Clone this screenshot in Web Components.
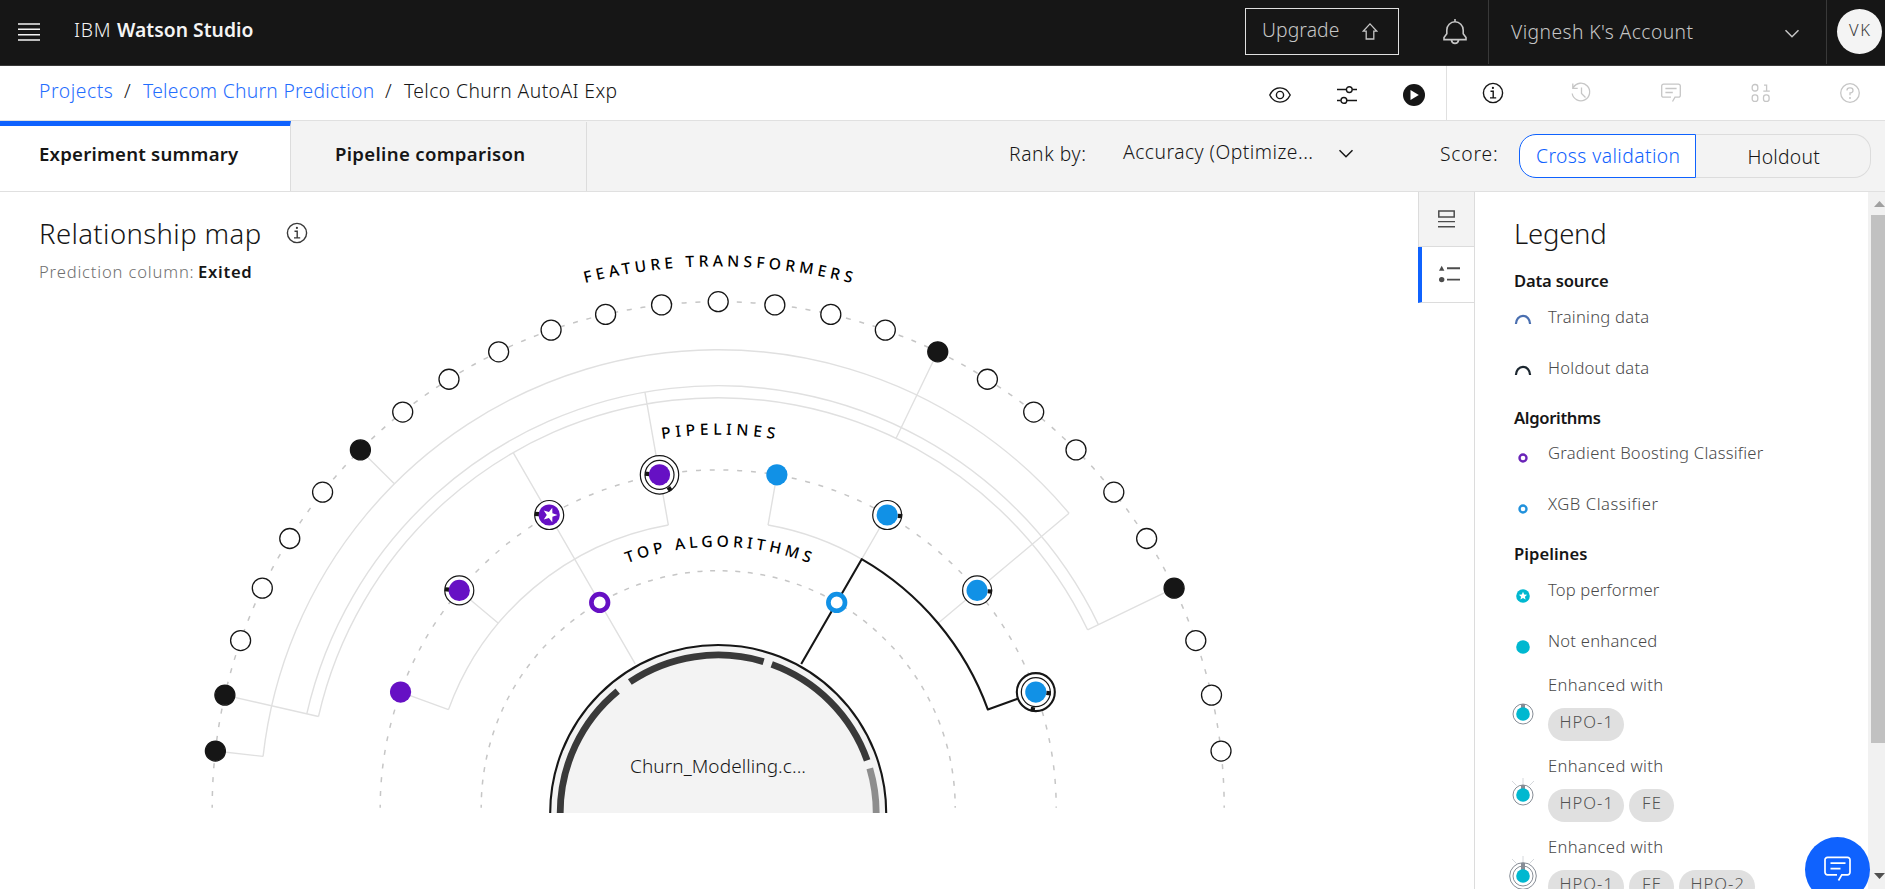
<!DOCTYPE html>
<html lang="en">
<head>
<meta charset="utf-8">
<title>IBM Watson Studio</title>
<style>
html,body{margin:0;height:100%;overflow:hidden;background:#fff;font-family:"Noto Sans",sans-serif;font-weight:300;color:#161616}
</style>
</head>
<body>
<watson-app></watson-app>
<script>
const define = (name, html, setup) => {
  const tpl = document.createElement('template');
  tpl.innerHTML = html;
  customElements.define(name, class extends HTMLElement {
    connectedCallback() {
      if (this.shadowRoot) return;
      this.attachShadow({mode: 'open'}).append(document.importNode(tpl.content, true));
      if (setup) setup.call(this, this.shadowRoot);
    }
  });
};

/* Single line of text tracked to a given width: w = width, s = font size */
define('fit-text', `<style>
:host{display:block;white-space:nowrap;line-height:24px;flex:none}
</style><span><slot></slot></span>`, function (root) {
  const w = +this.getAttribute('w'), n = this.textContent.length;
  this.style.fontSize = (this.getAttribute('s') || 19.3) + 'px';
  const span = root.querySelector('span');
  const nat = span.getBoundingClientRect().width;
  this.style.letterSpacing = ((w + 1.5 - nat) / n) + 'px';
  this.style.width = w + 'px';
});

const ICONS = {
  menu: ['22 18', '<path d="M0 1h22M0 6.3h22M0 11.7h22M0 17h22" stroke-width="1.5"/>'],
  up: ['16 17', '<path d="M8 .9 14.9 8.2H11.8V16H4.2V8.2H1.1Z" stroke-width="1.3"/>'],
  bell: ['24 27', '<path d="M12 0v2.5M1 20.6v-2.2l2.8-3.6V11a8.2 8.2 0 0 1 16.4 0v3.8l2.8 3.6v2.2ZM8.3 21a3.8 4.4 0 0 0 7.4 0" stroke-width="1.6"/>'],
  down: ['16 9', '<path d="M1.5 1.2 8 7.7l6.5-6.5" stroke-width="1.5"/>'],
  eye: ['22 18', '<path d="M.8 9C3 4.500 6.500 1.900 11 1.900S19 4.500 21.200 9C19 13.500 15.500 16.100 11 16.100S3 13.500.8 9Z" stroke-width="1.4"/><circle cx="11" cy="9" r="3.600" stroke-width="1.400"/>'],
  sliders: ['20 18', '<path d="M0 3.600h9.200M15.400 3.600H20M0 14.400h3.800M10 14.400H20" stroke-width="1.500"/><circle cx="12.300" cy="3.600" r="2.900" stroke-width="1.400"/><circle cx="6.900" cy="14.400" r="2.900" stroke-width="1.400"/>'],
  play: ['22 22', '<circle cx="11" cy="11" r="11" fill="currentColor" stroke="none"/><path d="M7.500 6v10l8.300-5z" fill="#fff" stroke="none"/>'],
  info: ['22 22', '<circle cx="11" cy="11" r="9.600" stroke-width="1.400"/><path d="M8.500 9.300h2.700v6.400M8 15.900h6.200" stroke-width="1.400"/><circle cx="10.900" cy="5.900" r="1.100" fill="currentColor" stroke="none"/>'],
  history: ['22 22', '<path d="M3.300 5.500A8.800 8.800 0 1 1 2.200 11.500M2.800 1.400v4.900h4.900M11.500 5.500v6l4 4" stroke-width="1.300"/>'],
  chat: ['22 20', '<path d="M12.500 18.500l2.500-4.300h3.500a1.800 1.800 0 0 0 1.800-1.800V3a1.800 1.800 0 0 0-1.800-1.800H3.500A1.800 1.800 0 0 0 1.700 3v9.400a1.800 1.800 0 0 0 1.800 1.800H11M5.400 5.500h11.200M5.400 9.500h7.400" stroke-width="1.300"/>'],
  bits: ['20 20', '<rect x="1.200" y="1.500" width="5.600" height="6.500" rx="2.500" stroke-width="1.300"/><rect x="1.200" y="11.900" width="5.600" height="6.500" rx="2.500" stroke-width="1.300"/><rect x="12.500" y="11.900" width="5.600" height="6.500" rx="2.500" stroke-width="1.300"/><path d="M13 2.200h2.600v6M12.300 8.200h6.500" stroke-width="1.300"/>'],
  help: ['22 22', '<circle cx="11" cy="11" r="9.300" stroke-width="1.300"/><path d="M8 8.600V8.300a2.500 2.500 0 0 1 2.500-2.500h1a2.500 2.500 0 0 1 0 5H11v2.500" stroke-width="1.300"/><circle cx="11" cy="15.900" r="1" fill="currentColor" stroke="none"/>'],
  rows: ['17 18', '<rect x=".8" y="1" width="15.400" height="6" stroke-width="1.500"/><path d="M0 11.600h17M0 16.800h17" stroke-width="1.400"/>'],
  legend: ['21 18', '<path d="M0 5.800 2.700.8 5.400 5.800Z" fill="currentColor" stroke="none"/><circle cx="2.700" cy="14.600" r="2.700" fill="currentColor" stroke="none"/><path d="M8 3.200h13M8 14.600h13" stroke-width="1.900"/>'],
  fab: ['28 26', '<path d="M14.500 24.500l3.300-5.700h5.700a2.500 2.500 0 0 0 2.500-2.500V3.800a2.500 2.500 0 0 0-2.500-2.500H3.500A2.500 2.500 0 0 0 1 3.800v12.500a2.500 2.500 0 0 0 2.500 2.500H13M6.500 7.200h15M6.500 12.700h10" stroke-width="1.700"/>'],
};
define('ui-icon', `<style>:host{display:block;flex:none}svg{display:block}</style><svg fill="none" stroke="currentColor"></svg>`, function (root) {
  const [box, art] = ICONS[this.getAttribute('name')], [w, h] = box.split(' ');
  const svg = root.querySelector('svg');
  svg.setAttribute('viewBox', '0 0 ' + box);
  svg.setAttribute('width', w);
  svg.setAttribute('height', h);
  svg.innerHTML = art;
});

define('app-header', `<style>
:host{display:flex;height:65px;background:#161616;border-bottom:1px solid #393939;color:#c6c6c6;align-items:flex-start;flex:none}
.menu{margin:23px 0 0 18px;color:#f4f4f4}
.ibm{margin:18px 0 0 34px;color:#f4f4f4}.ws{margin:18px 0 0 7px;color:#f4f4f4;font-weight:600}
.up{margin-left:auto;margin-top:8px;border:1px solid #e0e0e0;box-sizing:border-box;width:154px;height:47px;display:flex;padding:9px 0 0 16px;gap:24px}
.up ui-icon{margin-top:5px}
.bell{margin:19px 21px 0 44px}
.acct{border:solid #393939;border-width:0 1px;height:64px;width:339px;display:flex;padding:0 0 0 22px;box-sizing:border-box}
.acct fit-text{margin-top:20px}.acct ui-icon{margin:29px 0 0 92px}
.av{width:45px;height:45px;margin:9px 3px 0 10px;border-radius:50%;background:#f4f4f4;color:#393939;display:flex;justify-content:center}
.av fit-text{margin-top:9px}
</style>
<ui-icon class="menu" name="menu"></ui-icon>
<fit-text class="ibm" w="36">IBM</fit-text><fit-text class="ws" w="135">Watson Studio</fit-text>
<div class="up"><fit-text w="76">Upgrade</fit-text><ui-icon name="up"></ui-icon></div>
<ui-icon class="bell" name="bell"></ui-icon>
<div class="acct"><fit-text w="181">Vignesh K's Account</fit-text><ui-icon name="down"></ui-icon></div>
<div class="av"><fit-text s="16.500" w="21">VK</fit-text></div>`);

define('crumb-bar', `<style>
:host{display:flex;height:55px;border-bottom:1px solid #e0e0e0;flex:none;box-sizing:border-box;align-items:flex-start}
.c{display:flex;gap:12px;padding:13px 0 0 39px}
.a{color:#0f62fe;opacity:.92}
.t{margin-left:auto;display:flex;gap:46px;align-items:center;height:54px;padding:4px 21px 0 0;box-sizing:border-box;border-right:1px solid #e0e0e0}
.i{display:flex;align-items:center;height:54px;width:438px;box-sizing:border-box;padding:0 24px 0 35px;justify-content:space-between;color:#c6c6c6}
.i .on{color:#161616}.i .m{margin:0 2px 0 -2px}
</style>
<div class="c"><fit-text class="a" w="73">Projects</fit-text><fit-text w="7">/</fit-text><fit-text class="a" w="230">Telecom Churn Prediction</fit-text><fit-text w="7">/</fit-text><fit-text w="212">Telco Churn AutoAI Exp</fit-text></div>
<div class="t"><ui-icon name="eye"></ui-icon><ui-icon name="sliders"></ui-icon><ui-icon name="play"></ui-icon></div>
<div class="i"><ui-icon class="on" name="info"></ui-icon><ui-icon class="m" name="history"></ui-icon><ui-icon class="m" name="chat"></ui-icon><ui-icon name="bits"></ui-icon><ui-icon name="help"></ui-icon></div>`);

define('tab-bar', `<style>
:host{display:flex;height:71px;background:#f3f3f3;border-bottom:1px solid #e0e0e0;box-sizing:border-box;flex:none;align-items:flex-start}
.tab{height:70px;box-sizing:border-box;border-right:1px solid #dcdcdc;padding:20px 0 0 44px;font-weight:600}
.on{background:#fff;border-top:5px solid #0f62fe;width:291px;padding:16px 0 0 39px}
.off{width:296px;margin-top:1px;height:69px}
.r{margin:21px 0 0 auto}.v{margin:19px 0 0 38px}ui-icon{margin:28px 86px 0 26px}.s{margin-top:21px}
.seg{display:flex;margin:13px 14px 0 22px;height:44px}
.seg div{box-sizing:border-box;display:flex;justify-content:center;padding-top:10px}
.seg .x{padding-top:9px}
.x{width:177px;border:1px solid #0f62fe;border-radius:17px 0 0 17px;background:#fff;color:#0f62fe}
.h{width:175px;border:1px solid #dcdcdc;border-left:0;border-radius:0 17px 17px 0}
</style>
<div class="tab on"><fit-text s="18.600" w="198">Experiment summary</fit-text></div>
<div class="tab off"><fit-text s="18.600" w="189">Pipeline comparison</fit-text></div>
<fit-text class="r" w="76">Rank by:</fit-text><fit-text class="v" w="189">Accuracy (Optimize...</fit-text>
<ui-icon name="down"></ui-icon>
<fit-text class="s" w="57">Score:</fit-text>
<div class="seg"><div class="x"><fit-text w="143">Cross validation</fit-text></div><div class="h"><fit-text w="71">Holdout</fit-text></div></div>`);

define('relationship-map', `<style>
:host{display:grid;flex:1;min-width:0;height:697px}
:host>*{grid-area:1/1}
.t{display:flex;flex-direction:column;align-items:flex-start;padding:28px 0 0 39px}
.row{display:flex;gap:26px}.row fit-text{line-height:28px}.row ui-icon{margin-top:2px}
.sub{display:flex;gap:5px;margin-top:12px;color:#6f6f6f}.sub b{font-weight:600;color:#161616}
ui-icon{color:#393939}
svg{display:block}
.lab{font-size:15.600px;font-weight:500;fill:#000}
</style>
<svg width="1418" height="697" viewBox="0 192 1418 697"></svg>
<div class="t"><div class="row"><fit-text s="27.500" w="221">Relationship map</fit-text><ui-icon name="info"></ui-icon></div>
<div class="sub"><fit-text s="16.600" w="154">Prediction column:</fit-text><b><fit-text s="16.600" w="53">Exited</fit-text></b></div></div>`, function (root) {
  const CX = 718.2, CY = 807.700, K = '#161616', G = '#e0e0e0', P = '#6610c4', B = '#1191e6';
  const pt = (r, a, cy = CY) => [CX - r * Math.cos(a * Math.PI / 180), cy - r * Math.sin(a * Math.PI / 180)];
  const f = p => p.map(v => v.toFixed(2)).join(' ');
  const arc = (r, a, b, cy) => `M${f(pt(r, a, cy))}A${r} ${r} 0 0 1 ${f(pt(r, b, cy))}`;
  const line = (a, r1, r2) => `M${f(pt(r1, a))}L${f(pt(r2, a))}`;
  const path = (d, c, w, x = '') => `<path d="${d}" fill="none" stroke="${c}" stroke-width="${w}" ${x}/>`;
  const circ = (p, r, fill, st = 'none', w = 0) => `<circle cx="${p[0].toFixed(2)}" cy="${p[1].toFixed(2)}" r="${r}" fill="${fill}" stroke="${st}" stroke-width="${w}"/>`;
  let s = '';
  for (const [r, pitch] of [[506, 13.82], [338, 13.79], [237, 12.62]])
    s += path(arc(r, 0, 180), '#c6c6c6', 1.5, `stroke-dasharray="5 ${pitch - 5}" stroke-dashoffset="2"`);
  const t = 180 / 28;
  s += path(arc(458, t, 140) + arc(422, 2 * t, 24 * t) + arc(410, 2 * t, 24 * t) +
    line(t, 506, 458) + line(7 * t, 506, 458) + line(2 * t, 506, 410) + line(18 * t, 506, 410) + line(24 * t, 506, 410) +
    line(60, 410, 166) + line(80, 422, 287) + line(140, 458, 287) + line(20, 338, 287) + line(40, 338, 287) +
    line(100, 338, 287) + line(120, 338, 287) + arc(287, 20, 80) + arc(287, 100, 120), G, 1.4);
  s += path(`M${f(pt(166, 120))}L${f(pt(287, 120))}A287 287 0 0 1 ${f(pt(287, 160))}L${f(pt(320, 160))}`, K, 2.1, 'stroke-linejoin="round"');
  for (let k = 1; k < 28; k++) {
    const on = [1, 2, 7, 18, 24].includes(k);
    s += circ(pt(506, k * t), 10, on ? K : '#fff', K, 1.3);
  }
  const mark = (p, dx, dy, a) => `<rect x="-2" y="-2.100" width="4.500" height="4.200" fill="${K}" transform="translate(${p[0] + dx} ${p[1] + dy}) rotate(${a})"/>`;
  for (let k = 1; k < 9; k++) {
    const p = pt(338, k * 20), c = k < 5 ? P : B;
    if (k == 4) s += circ(p, 19.2, '#fff', K, 1.2);
    if (k == 8) s += circ(p, 19, '#fff', K, 2.1);
    if (k != 1 && k != 5) s += circ(p, 14.500, '#fff', K, 1.2) + (k < 5 ? mark(p, -12.5, -1, 5) : mark(p, 12.5, 1, 5));
    if (k == 4) s += mark(p, 10, 14, 55);
    if (k == 8) s += mark(p, -3, 17, 100);
    s += circ(p, 10.600, c);
    if (k == 3) {
      const q = [];
      for (let i = 0; i < 10; i++) {
        const r = i % 2 ? 3.1 : 7.6, a = i * Math.PI / 5;
        q.push((p[0] + .7 + r * Math.cos(a)).toFixed(2) + ',' + (p[1] + r * Math.sin(a)).toFixed(2));
      }
      s += `<polygon points="${q.join(' ')}" fill="#fff"/>`;
    }
  }
  s += circ(pt(237, 60), 8.3, '#fff', P, 4.7) + circ(pt(237, 120), 8.3, '#fff', B, 4.7);
  const H = 813;
  s += `<path d="${arc(168, 0, 180, H)}Z" fill="#f3f3f3"/>` + path(arc(168, 0, 180, H), K, 2.1);
  s += path(arc(158, 0, 50.5, H) + arc(158, 56, 106.7, H) + arc(158, 109.8, 160.5, H), '#393939', 6.8) + path(arc(158, 163.6, 180, H), '#8d8d8d', 6.8);
  const label = (id, r, len, text) => `<path id="${id}" d="${arc(r, 0, 180)}" fill="none"/><text class="lab" text-anchor="middle" textLength="${len}"><textPath href="#${id}" startOffset="50%">${text}</textPath></text>`;
  s += label('ft', 541.5, 269, 'FEATURE TRANSFORMERS') + label('pl', 373, 113, 'PIPELINES') + label('ta', 261, 186, 'TOP ALGORITHMS');
  s += `<text x="630" y="773" font-size="19" textLength="176" fill="#161616">Churn_Modelling.c...</text>`;
  root.querySelector('svg').innerHTML = s;
});

define('side-strip', `<style>
:host{display:block;width:56px;flex:none}
div{height:54px;display:flex;align-items:center;justify-content:center;border-bottom:1px solid #dcdcdc;color:#4c4c4c;border-left:1px solid #dcdcdc;background:#f3f3f3;box-sizing:content-box;width:55px}
.on{background:#fff;border-left:4px solid #0f62fe;width:52px;height:55px}
.on ui-icon{margin:0 0 1px 2px}
</style><div><ui-icon name="rows"></ui-icon></div><div class="on"><ui-icon name="legend"></ui-icon></div>`);

define('enh-tag', `<style>:host{display:flex;box-sizing:border-box;height:33px;border-radius:16.500px;background:#e0e0e0;color:#525252;justify-content:center;padding-top:2px;flex:none}</style>`, function (root) {
  const n = this.getAttribute('label'), t = document.createElement('fit-text');
  this.style.width = n === 'FE' ? '45px' : '76px';
  t.setAttribute('s', 16.6);
  t.setAttribute('w', n === 'FE' ? 19 : 53);
  t.textContent = n;
  root.append(t);
});

const C = '#00b8d0';
const ring = (r, c) => `<circle cx="15" cy="20" r="${r}" fill="none" stroke="#878d96" stroke-width="1"/>`;
const rays = '<path d="M15 3v7M4 6l4.500 4.500M26 6l-4.500 4.500" stroke="#d5d8dc" stroke-width="1"/>';
const dot = `<circle cx="15" cy="20" r="6.800" fill="${C}"/>`;
const MARKS = {
  train: '<path d="M7.900 25a7.100 8.200 0 0 1 14.200 0" fill="none" stroke="#4a6fb0" stroke-width="2.200"/>',
  hold: '<path d="M7.900 25a7.100 8.200 0 0 1 14.200 0" fill="none" stroke="#1c2730" stroke-width="2.200"/>',
  gb: '<circle cx="15" cy="20" r="3.500" fill="none" stroke="#6a24b8" stroke-width="2.400"/>',
  xgb: '<circle cx="15" cy="20" r="3.500" fill="none" stroke="#2191dc" stroke-width="2.400"/>',
  top: dot + '<path d="M15 15.800l1.200 2.700 2.900.3-2.200 1.900.7 2.900-2.600-1.500-2.600 1.500.7-2.900-2.200-1.900 2.900-.3z" fill="#fff"/>',
  not: dot,
  e1: ring(10) + '<path d="M15 10v4" stroke="#878d96" stroke-width="4"/>' + dot,
  e2: rays + ring(10) + '<path d="M15 10v4" stroke="#878d96" stroke-width="4"/>' + dot,
  e3: '<g transform="translate(0 -3)">' + rays + '</g>' + ring(13.3) + ring(10) + '<path d="M15 7v7" stroke="#878d96" stroke-width="4"/>' + dot,
};
/* Marker plus caption; dy shifts the marker inside the row */
define('legend-row', `<style>
:host{display:grid;grid-template-columns:30px 1fr;column-gap:10px;height:51px;color:#4a4a4a}
svg{display:block}div{display:flex;gap:5px;margin-top:11px}
</style><svg width="30" height="36"></svg><section><slot></slot><div></div></section>`, function (root) {
  const svg = root.querySelector('svg');
  svg.innerHTML = MARKS[this.getAttribute('mark')];
  svg.style.marginTop = (this.getAttribute('dy') || 0) + 'px';
  const tags = this.getAttribute('tags');
  if (tags) {
    this.style.height = '81px';
    root.querySelector('div').innerHTML = tags.split(',').map(n => `<enh-tag label="${n}"></enh-tag>`).join('');
  }
});

define('legend-panel', `<style>
:host{display:block;width:394px;flex:none;box-sizing:border-box;border-left:1px solid #dcdcdc;height:697px;overflow:hidden;padding:28px 0 0 33px}
.h{margin:0 0 0 6px;line-height:28px}
b{display:block;font-weight:600;margin-left:6px}
</style>
<fit-text class="h" s="27.500" w="91">Legend</fit-text>
<b style="margin-top:21px"><fit-text s="16.600" w="93">Data source</fit-text></b>
<legend-row style="margin-top:12px" mark="train" dy="-6"><fit-text s="16.600" w="100">Training data</fit-text></legend-row>
<legend-row mark="hold" dy="-6"><fit-text s="16.600" w="100">Holdout data</fit-text></legend-row>
<b style="margin-top:-1px"><fit-text s="16.600" w="85">Algorithms</fit-text></b>
<legend-row style="margin-top:11px" mark="gb" dy="-3"><fit-text s="16.600" w="214">Gradient Boosting Classifier</fit-text></legend-row>
<legend-row mark="xgb" dy="-3"><fit-text s="16.600" w="109">XGB Classifier</fit-text></legend-row>
<b style="margin-top:-1px"><fit-text s="16.600" w="72">Pipelines</fit-text></b>
<legend-row style="margin-top:12px" mark="top" dy="-2"><fit-text s="16.600" w="110">Top performer</fit-text></legend-row>
<legend-row style="height:44px" mark="not" dy="-2"><fit-text s="16.600" w="108">Not enhanced</fit-text></legend-row>
<legend-row mark="e1" dy="20.500" tags="HPO-1"><fit-text s="16.600" w="114">Enhanced with</fit-text></legend-row>
<legend-row mark="e2" dy="20.500" tags="HPO-1,FE"><fit-text s="16.600" w="114">Enhanced with</fit-text></legend-row>
<legend-row mark="e3" dy="20.500" tags="HPO-1,FE,HPO-2"><fit-text s="16.600" w="114">Enhanced with</fit-text></legend-row>`);

define('scroll-track', `<style>
:host{display:flex;flex-direction:column;width:17px;height:697px;background:#f1f1f1;flex:none;box-sizing:border-box;overflow:hidden;align-items:flex-end}
i{display:block;width:14px;height:528px;background:#c1c1c1}
svg{display:block;flex:none}.e{margin-top:auto}
</style>
<svg width="11" height="23"><path d="M0 15 5.500 9 11 15z" fill="#a0a0a0"/></svg><i></i>
<svg class="e" width="11" height="24"><path d="M0 8 5.500 14 11 8z" fill="#505050"/></svg>`);

define('chat-button', `<style>
:host{position:absolute;left:1805px;top:837px;width:65px;height:65px;border-radius:50%;background:#0f62fe;color:#fff;display:flex;justify-content:center;padding-top:19px;box-sizing:border-box}
</style><ui-icon name="fab"></ui-icon>`);

define('watson-app', `<style>
:host{display:flex;flex-direction:column;width:1885px;height:889px;overflow:hidden;position:relative}
main{display:flex;height:697px}
</style>
<app-header></app-header><crumb-bar></crumb-bar><tab-bar></tab-bar>
<main><relationship-map></relationship-map><side-strip></side-strip><legend-panel></legend-panel><scroll-track></scroll-track></main>
<chat-button></chat-button>`);
</script>
</body>
</html>
